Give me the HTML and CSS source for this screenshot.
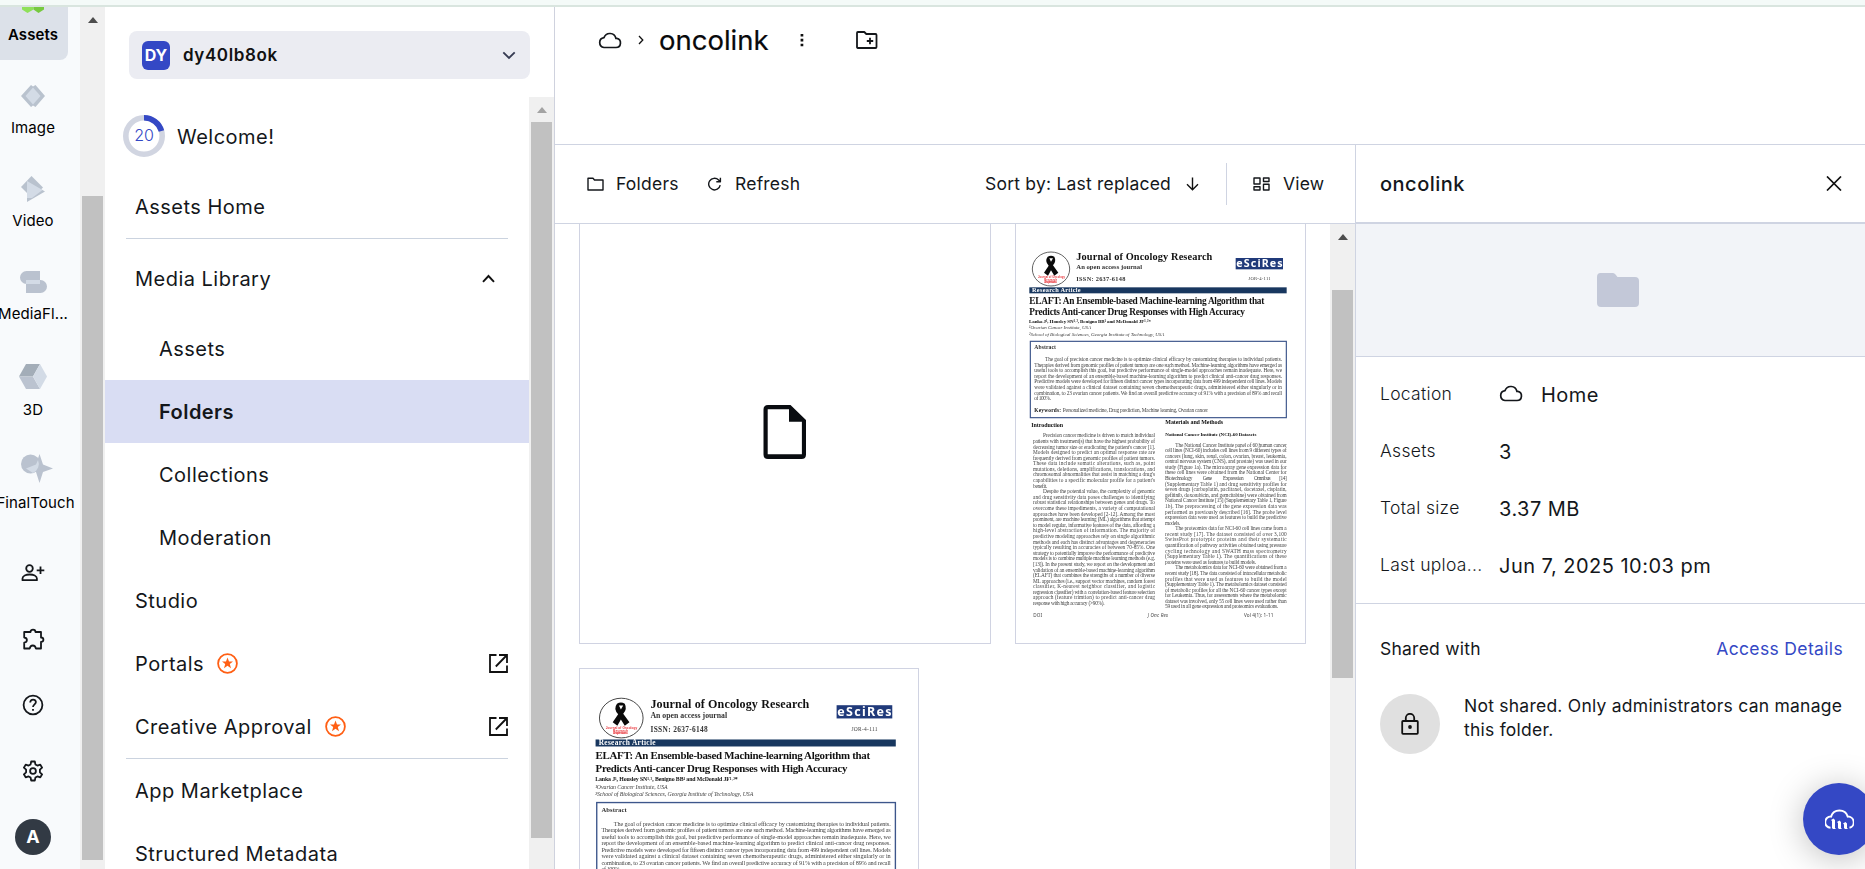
FILE: index.html
```html
<!DOCTYPE html>
<html lang="en">
<head>
<meta charset="utf-8">
<title>oncolink - Media Library</title>
<link rel="stylesheet" href="styles.css">
</head>
<body>
<div class="topstrip"></div>
<div class="app">
  <nav class="rail">
    <a class="product active">
      <svg class="picon" width="24" height="24" viewBox="0 0 24 24"><path d="M1 0h11.500v19.500L6.500 23 1 19.500z" fill="#8fe05a"/><path d="M12.500 0H23v19.500L17.500 23l-5-3.500z" fill="#76c93f"/></svg>
      <span>Assets</span></a>
    <a class="product first"><svg class="picon" width="24" height="22" viewBox="0 0 24 22"><path d="M10 0l2 1.500L14.500 0 24 11l-9.500 11-2.500-1.500L10 22 0 11z" fill="#b9c2ce"/><path d="M12 2.500L19.500 11 12 19.500 4.500 11z" fill="#d3dbe6"/></svg><span>Image</span></a>
    <a class="product video"><svg class="picon" width="24" height="26" viewBox="0 0 24 26"><path d="M10.500 0L22 11.500 11 22 0 11z" fill="#b9c2ce"/><path d="M6 5v21l18-10.500z" fill="#b9c2ce"/><path d="M6 5l15.500 9L11 22H6z" fill="#d3dbe6"/></svg><span>Video</span></a>
    <a class="product"><svg class="picon" width="27" height="22" viewBox="0 0 27 22"><path d="M6.500 0H20v13H6.500a6.500 6.500 0 0 1 0-13zM6 9h14.500a6.500 6.500 0 0 1 0 13H6z" fill="#bac2cf"/><path d="M6 9h14v4H6z" fill="#d3dbe6"/></svg><span>MediaFl...</span></a>
    <a class="product tall"><svg class="picon" width="28" height="25" viewBox="0 0 28 25"><path d="M7 0h14l-7 12.500H0z" fill="#a3adb8"/><path d="M0 12.500h14L21 25H7z" fill="#bbc3d0"/><path d="M21 0l7 12.500L21 25l-7-12.500z" fill="#d3dbe6"/></svg><span>3D</span></a>
    <a class="product last"><svg class="picon shift" width="32" height="29" viewBox="0 0 32 29"><circle cx="9.500" cy="10" r="9.500" fill="#bac2cf"/><path d="M18.500 0l3.500 10.500L32 14.500 22 18l-3.500 11L15 18 5 14.500l10-4z" fill="#bac2cf"/><path d="M5 14.500l10-4 2-4.500a10 10 0 0 1-5 13z" fill="#d3dbe6"/></svg><span>FinalTouch</span></a>
    <div class="tools">
      <svg width="24" height="24" viewBox="0 0 24 24" class="line"><circle cx="8.500" cy="7.500" r="3.300"/><path d="M1.500 19.200v-1.700c0-2.600 3.500-4 7.200-4s7.200 1.400 7.200 4v1.700zM19.500 5.500v7.500M15.700 9.300h7.600"/></svg>
      <svg width="24" height="24" viewBox="0 0 24 24" class="line"><path d="M3.200 5h6.300C9.500 1.700 14.500 1.700 14.500 5H20v5.500c3.200 0 3.200 4.300 0 4.300V21.500h-5.200c-.5-4-5.500-4-6 0H3.200v-5.800c3.600-.5 3.600-4.700 0-5.200z"/></svg>
      <svg width="24" height="24" viewBox="0 0 24 24" class="line"><circle cx="12" cy="12" r="9.400"/><path d="M9.200 9.500c.2-4 5.700-3.700 5.700-.4 0 2.200-2.900 2.400-2.900 5M12 16v1.800"/></svg>
      <svg width="24" height="24" viewBox="0 0 24 24" class="line"><circle cx="12" cy="12" r="2.900"/><path d="M10.200 2.500h3.600l.6 2.900 2 1.200 2.900-1 1.800 3.100-2.200 2v2.600l2.200 2-1.800 3.100-2.900-1-2 1.200-.6 2.900h-3.600l-.6-2.900-2-1.200-2.900 1-1.800-3.100 2.200-2v-2.600l-2.200-2 1.800-3.100 2.900 1 2-1.200z"/></svg>
      <b class="avatar">A</b>
    </div>
  </nav>
  <div class="scroll s-rail"><i class="arrow"></i><i class="thumb"></i></div>

  <aside class="sidebar">
    <div class="account"><b>DY</b><span>dy40lb8ok</span><svg width="14" height="9" viewBox="0 0 14 9"><path d="M1.300 1.300L7 7l5.700-5.700" fill="none" stroke="#363b52" stroke-width="1.800"/></svg></div>
    <div class="navwrap">
      <div class="nav">
        <div class="welcome"><svg width="42" height="42" viewBox="0 0 42 42"><circle cx="21" cy="21" r="18.200" fill="none" stroke="#d1d5e1" stroke-width="5.600"/><path d="M21 2.800A18.200 18.200 0 0 1 38.500 16" fill="none" stroke="#3448c5" stroke-width="5.600"/><text x="21" y="26.300" text-anchor="middle" class="ringnum">20</text></svg><span>Welcome!</span></div>
        <div class="row">Assets Home</div>
        <hr>
        <div class="row lib">Media Library<svg class="end up" width="13" height="9" viewBox="0 0 13 9"><path d="M1 7.800l5.500-5.800L12 7.800" fill="none" stroke="#111" stroke-width="1.900"/></svg></div>
        <div class="row sub">Assets</div>
        <div class="row sub current">Folders</div>
        <div class="row sub">Collections</div>
        <div class="row sub">Moderation</div>
        <div class="row">Studio</div>
        <div class="row">Portals<svg class="star" width="21" height="21" viewBox="0 0 21 21"><circle cx="10.500" cy="10.500" r="9.400" fill="none" stroke="#ff5f14" stroke-width="1.800"/><path d="M10.500 4.600l1.500 4h4l-3.200 2.500 1.200 4.100-3.500-2.400L7 15.200l1.200-4.100L5 8.600h4z" fill="#ff5f14"/></svg><svg class="end" width="19" height="19" viewBox="0 0 19 19"><path d="M7.500 1H1v17h17v-6.500M10 1h8v8M18 1L6.800 12.500" fill="none" stroke="#111" stroke-width="1.800"/></svg></div>
        <div class="row">Creative Approval<svg class="star" width="21" height="21" viewBox="0 0 21 21"><circle cx="10.500" cy="10.500" r="9.400" fill="none" stroke="#ff5f14" stroke-width="1.800"/><path d="M10.500 4.600l1.500 4h4l-3.200 2.500 1.200 4.100-3.500-2.400L7 15.200l1.200-4.100L5 8.600h4z" fill="#ff5f14"/></svg><svg class="end" width="19" height="19" viewBox="0 0 19 19"><path d="M7.500 1H1v17h17v-6.500M10 1h8v8M18 1L6.800 12.500" fill="none" stroke="#111" stroke-width="1.800"/></svg></div>
        <hr>
        <div class="row">App Marketplace</div>
        <div class="row">Structured Metadata</div>
      </div>
      <div class="scroll s-nav"><i class="arrow dim"></i><i class="thumb"></i></div>
    </div>
  </aside>

  <main class="main">
    <header class="crumbs">
      <svg width="24" height="18" viewBox="0 0 24 18" class="cloud"><path d="M6 16.500h12a4.600 4.600 0 0 0 .8-9.100h-.9A6.200 6.200 0 0 0 6 6.600a5 5 0 0 0 0 9.900z"/></svg>
      <svg class="sep" width="6" height="10" viewBox="0 0 6 10"><path d="M1 1l3.800 4L1 9" fill="none" stroke="#111" stroke-width="1.300"/></svg>
      <h1>oncolink</h1>
      <svg class="dots" width="4" height="14" viewBox="0 0 4 14"><path d="M.6 1h2.700v2.600H.6zM.6 5.800h2.700v2.600H.6zM.6 10.700h2.700v2.600H.6z" fill="#111"/></svg>
      <svg width="22" height="18" viewBox="0 0 22 18" class="line"><path d="M1.800 1h6.500l2 2h9.200q1 0 1 1v12q0 1-1 1H1.800q-.8 0-.8-1V2q0-1 .8-1zM14 6.800v6.400M10.800 10h6.400"/></svg>
    </header>
    <div class="lower">
      <section class="browser">
        <div class="toolbar">
          <svg width="17" height="14" viewBox="0 0 17 14" class="line thin"><path d="M1 1.200h5l1.500 1.800H16v10H1z"/></svg><span class="t-folders">Folders</span>
          <svg width="15" height="14" viewBox="0 0 15 14" class="line thin"><path d="M13.200 8.200A5.800 5.800 0 1 1 11.600 3l1.600 1.600M13.400.8v4H9.300"/></svg><span class="t-refresh">Refresh</span>
          <span class="t-sort">Sort by: Last replaced</span>
          <svg class="down" width="13" height="14" viewBox="0 0 13 14"><path d="M6.500.5v12M1 7.200l5.500 5.500L12 7.200" fill="none" stroke="#111" stroke-width="1.400"/></svg>
          <i class="vline"></i>
          <svg width="17" height="14" viewBox="0 0 17 14" class="line thin"><path d="M1 1h6v6H1zM10.500 1H16v3.500h-5.500zM1 9.700h6V13H1zM10.500 7.300H16V13h-5.500z"/></svg><span class="t-view">View</span>
        </div>
        <div class="gridwrap">
          <div class="cards">
            <div class="card c1"><svg width="43" height="54" viewBox="0 0 43 54"><path d="M5 0h22.500L43 15v34.500q0 4.500-4.500 4.500H5q-4.500 0-4.500-4.500V4.500Q.5 0 5 0zM4.700 4.300v45h34.200V16.700H26V4.300z" fill="#090c10" fill-rule="evenodd"/></svg></div>
            <div class="card c2">
              <svg class="doc" viewBox="18 12 867 1257" preserveAspectRatio="xMinYMin meet">
                <ellipse cx="123" cy="147" rx="56" ry="51" fill="#fff" stroke="#444" stroke-width="2.500"/>
                <path d="M113 110q10-6 20 0 7 14-4 26l16 22-12 9-10-16-9 16-12-9 14-21q-13-14-3-27zm5 5l5 10 6-10z" fill="#0a0a0a" fill-rule="evenodd"/>
                <g class="red"><text x="84" y="175" textLength="81">Journal of Oncology</text><text x="103" y="182" textLength="38">Research</text><text x="103" y="189" textLength="38">An open access</text></g>
                <text class="b" x="199" y="121" font-size="31" textLength="408">Journal of Oncology Research</text>
                <text class="b soft" x="199" y="146" font-size="20" textLength="197">An open access journal</text>
                <text class="b soft" x="199" y="184" font-size="19" textLength="147">ISSN:  2637-6148</text>
                <rect x="677" y="114" width="142" height="34" fill="#203a7a"/><text class="logo" x="679" y="141" textLength="139">eSciRes</text>
                <text x="715" y="179" font-size="14" textLength="67">JOR-4-111</text>
                <rect x="58" y="202" width="772" height="18" fill="#18375f"/><text class="b white" x="66" y="217" font-size="19" textLength="146">Research Article</text>
                <text class="b" x="58" y="251" font-size="28" textLength="705">ELAFT: An Ensemble-based Machine-learning Algorithm that</text>
                <text class="b" x="58" y="286" font-size="28" textLength="647">Predicts Anti-cancer Drug Responses with High Accuracy</text>
                <text class="b" x="57" y="308" font-size="15" textLength="366">Lanka J¹, Housley SN¹˒², Benigno BB¹ and McDonald JF¹˒²*</text>
                <text class="i" x="57" y="328" font-size="15" textLength="186">¹Ovarian Cancer Institute, USA</text>
                <text class="i" x="57" y="347" font-size="15" textLength="406">²School of Biological Sciences, Georgia Institute of Technology, USA</text>
                <rect x="61" y="364" width="768" height="229" fill="none" stroke="#3d568b" stroke-width="3.500"/>
                <text class="b soft" x="73" y="387" font-size="17" textLength="65">Abstract</text>
                <g class="body">
                <text x="105" y="423" textLength="711">The goal of precision cancer medicine is to optimize clinical efficacy by customizing therapies to individual patients.</text>
                <text x="73" y="440" textLength="743">Therapies derived from genomic profiles of patient tumors are one such method. Machine-learning algorithms have emerged as</text>
                <text x="73" y="457" textLength="743">useful tools to accomplish this goal, but predictive performance of single-model approaches remain inadequate. Here, we</text>
                <text x="73" y="473" textLength="743">report the development of an ensemble-based machine-learning algorithm to predict clinical anti-cancer drug responses.</text>
                <text x="73" y="490" textLength="743">Predictive models were developed for fifteen distinct cancer types incorporating data from 499 independent cell lines. Models</text>
                <text x="73" y="507" textLength="743">were validated against a clinical dataset containing seven chemotherapeutic drugs, administered either singularly or in</text>
                <text x="73" y="524" textLength="743">combination, to 23 ovarian cancer patients. We find an overall predictive accuracy of 91% with a precision of 89% and recall</text>
                <text x="73" y="541" textLength="50">of 100%.</text>
                <text class="b" x="73" y="577" textLength="80">Keywords:</text><text x="158" y="577" textLength="436">Personalized medicine, Drug prediction, Machine learning, Ovarian cancer</text>
                <text class="b" x="64" y="620" font-size="18" textLength="95">Introduction</text>
                <text x="99" y="652" textLength="336">Precision cancer medicine is driven to match individual</text>
                <text x="69" y="669" textLength="366">patients with treatment(s) that have the highest probability of</text>
                <text x="69" y="686" textLength="366">decreasing tumor size or eradicating the patient's cancer [1].</text>
                <text x="69" y="702" textLength="366">Models designed to predict an optimal response rate are</text>
                <text x="69" y="719" textLength="366">frequently derived from genomic profiles of patient tumors.</text>
                <text x="69" y="736" textLength="366">These data include somatic alterations, such as, point</text>
                <text x="69" y="753" textLength="366">mutations, deletions, amplifications, translocations, and</text>
                <text x="69" y="769" textLength="366">chromosomal abnormalities that assist in matching a drug's</text>
                <text x="69" y="786" textLength="366">capabilities to a specific molecular profile for a patient's</text>
                <text x="69" y="803" textLength="43">benefit.</text>
                <text x="99" y="820" textLength="336">Despite the potential value, the complexity of genomic</text>
                <text x="69" y="836" textLength="366">and drug sensitivity data poses challenges to identifying</text>
                <text x="69" y="853" textLength="366">robust statistical relationships between genes and drugs. To</text>
                <text x="69" y="870" textLength="366">overcome these impediments, a variety of computational</text>
                <text x="69" y="887" textLength="366">approaches have been developed [2-12]. Among the most</text>
                <text x="69" y="904" textLength="366">prominent, are machine learning (ML) algorithms that attempt</text>
                <text x="69" y="920" textLength="366">to model regular, informative features of the data, affording a</text>
                <text x="69" y="937" textLength="366">high-level abstraction of information. The majority of</text>
                <text x="69" y="954" textLength="366">predictive modeling approaches rely on single algorithmic</text>
                <text x="69" y="971" textLength="366">methods and each has distinct advantages and degeneracies</text>
                <text x="69" y="987" textLength="366">typically resulting in accuracies of between 70-85%. One</text>
                <text x="69" y="1004" textLength="366">strategy to potentially improve the performance of predictive</text>
                <text x="69" y="1021" textLength="366">models is to combine multiple machine learning methods (e.g.</text>
                <text x="69" y="1038" textLength="366">[13]). In the present study, we report on the development and</text>
                <text x="69" y="1055" textLength="366">validation of an ensemble-based machine-learning algorithm</text>
                <text x="69" y="1071" textLength="366">(ELAFT) that combines the strengths of a number of diverse</text>
                <text x="69" y="1088" textLength="366">ML approaches (i.e., support vector machines, random forest</text>
                <text x="69" y="1105" textLength="366">classifier, K-nearest neighbor classifier, and logistic</text>
                <text x="69" y="1121" textLength="366">regression classifier) with a correlation-based feature selection</text>
                <text x="69" y="1138" textLength="366">approach (feature trimtion) to predict anti-cancer drug</text>
                <text x="69" y="1154" textLength="215">response with high accuracy (&gt;90%).</text>
                <text class="b" x="466" y="613" font-size="18" textLength="173">Materials and Methods</text>
                <text class="b" x="466" y="649" font-size="15" textLength="273">National Cancer Institute (NCI)-60 Datasets</text>
                <text x="496" y="680" textLength="334">The National Cancer Institute panel of 60 human cancer</text>
                <text x="465" y="696" textLength="365">cell lines (NCI-60) includes cell lines from 9 different types of</text>
                <text x="465" y="713" textLength="365">cancers (lung, skin, renal, colon, ovarian, breast, leukemia,</text>
                <text x="465" y="730" textLength="365">central nervous system (CNS), and prostate) was used in our</text>
                <text x="465" y="747" textLength="365">study (Figure 1a). The microarray gene expression data for</text>
                <text x="465" y="763" textLength="365">these cell lines were obtained from the National Center for</text>
                <text x="465" y="780" textLength="82">Biotechnology</text><text x="578" y="780" textLength="28">Gene</text><text x="639" y="780" textLength="62">Expression</text><text x="732" y="780" textLength="50">Omnibus</text><text x="808" y="780" textLength="22">[14]</text>
                <text x="465" y="797" textLength="365">(Supplementary Table 1) and drug sensitivity profiles for</text>
                <text x="465" y="814" textLength="365">seven drugs (carboplatin, paclitaxel, docetaxel, cisplatin,</text>
                <text x="465" y="830" textLength="365">gefitinib, doxorubicin, and gemcitabine) were obtained from</text>
                <text x="465" y="847" textLength="365">National Cancer Institute [15] (Supplementary Table 1, Figure</text>
                <text x="465" y="864" textLength="365">1b). The preprocessing of the gene expression data was</text>
                <text x="465" y="881" textLength="365">performed as previously described [16]. The probe level</text>
                <text x="465" y="897" textLength="365">expression data were used as features to build the predictive</text>
                <text x="465" y="914" textLength="46">models.</text>
                <text x="496" y="931" textLength="334">The proteomics data for NCI-60 cell lines came from a</text>
                <text x="465" y="948" textLength="365">recent study [17]. The dataset consisted of over 3,100</text>
                <text x="465" y="964" textLength="365">SwissProt prototypic proteins and their systematic</text>
                <text x="465" y="981" textLength="365">quantification of pathway activities obtained using pressure</text>
                <text x="465" y="998" textLength="365">cycling technology and SWATH mass spectrometry</text>
                <text x="465" y="1015" textLength="365">(Supplementary Table 1). The quantifications of these</text>
                <text x="465" y="1031" textLength="273">proteins were used as features to build models.</text>
                <text x="496" y="1048" textLength="334">The metabolomics data for NCI-60 were obtained from a</text>
                <text x="465" y="1065" textLength="365">recent study [18]. The data consisted of intracellular metabolic</text>
                <text x="465" y="1082" textLength="365">profiles that were used as features to build the model</text>
                <text x="465" y="1098" textLength="365">(Supplementary Table 1). The metabolomics dataset consisted</text>
                <text x="465" y="1115" textLength="365">of metabolic profiles for all the NCI-60 cancer types except</text>
                <text x="465" y="1132" textLength="365">for Leukemia. Thus, for assessments where the metabolomic</text>
                <text x="465" y="1149" textLength="365">dataset was involved, only 55 cell lines were used rather than</text>
                <text x="465" y="1165" textLength="340">59 used in all gene expression and proteomics evaluations.</text>
                <text class="foot" x="70" y="1190" textLength="26">DOI</text><text class="foot it" x="413" y="1190" textLength="61">J Onc Res</text><text class="foot" x="702" y="1190" textLength="88">Vol 4(1): 1-11</text>
                </g>
              </svg>
            </div>
            <div class="card c3">
              <svg class="doc" viewBox="18 21 868 513" preserveAspectRatio="xMinYMin meet">
                <ellipse cx="124" cy="147" rx="56" ry="51" fill="#fff" stroke="#444" stroke-width="2.500"/>
                <path d="M113 110q10-6 20 0 7 14-4 26l16 22-12 9-10-16-9 16-12-9 14-21q-13-14-3-27zm5 5l5 10 6-10z" fill="#0a0a0a" fill-rule="evenodd"/>
                <g class="red"><text x="84" y="175" textLength="81">Journal of Oncology</text><text x="103" y="182" textLength="38">Research</text><text x="103" y="189" textLength="38">An open access</text></g>
                <text class="b" x="199" y="121" font-size="31" textLength="408">Journal of Oncology Research</text>
                <text class="b soft" x="199" y="146" font-size="20" textLength="197">An open access journal</text>
                <text class="b soft" x="199" y="184" font-size="19" textLength="147">ISSN:  2637-6148</text>
                <rect x="677" y="114" width="143" height="34" fill="#203a7a"/><text class="logo" x="679" y="141" textLength="139">eSciRes</text>
                <text x="715" y="179" font-size="14" textLength="67">JOR-4-111</text>
                <rect x="58" y="202" width="771" height="18" fill="#18375f"/><text class="b white" x="66" y="217" font-size="19" textLength="146">Research Article</text>
                <text class="b" x="58" y="251" font-size="28" textLength="705">ELAFT: An Ensemble-based Machine-learning Algorithm that</text>
                <text class="b" x="58" y="286" font-size="28" textLength="647">Predicts Anti-cancer Drug Responses with High Accuracy</text>
                <text class="b" x="57" y="308" font-size="15" textLength="366">Lanka J¹, Housley SN¹˒², Benigno BB¹ and McDonald JF¹˒²*</text>
                <text class="i" x="57" y="328" font-size="15" textLength="186">¹Ovarian Cancer Institute, USA</text>
                <text class="i" x="57" y="347" font-size="15" textLength="406">²School of Biological Sciences, Georgia Institute of Technology, USA</text>
                <rect x="61" y="364" width="767" height="229" fill="none" stroke="#3d568b" stroke-width="3.500"/>
                <text class="b soft" x="73" y="387" font-size="17" textLength="65">Abstract</text>
                <g class="body">
                <text x="105" y="423" textLength="711">The goal of precision cancer medicine is to optimize clinical efficacy by customizing therapies to individual patients.</text>
                <text x="73" y="440" textLength="743">Therapies derived from genomic profiles of patient tumors are one such method. Machine-learning algorithms have emerged as</text>
                <text x="73" y="457" textLength="743">useful tools to accomplish this goal, but predictive performance of single-model approaches remain inadequate. Here, we</text>
                <text x="73" y="473" textLength="743">report the development of an ensemble-based machine-learning algorithm to predict clinical anti-cancer drug responses.</text>
                <text x="73" y="490" textLength="743">Predictive models were developed for fifteen distinct cancer types incorporating data from 499 independent cell lines. Models</text>
                <text x="73" y="507" textLength="743">were validated against a clinical dataset containing seven chemotherapeutic drugs, administered either singularly or in</text>
                <text x="73" y="524" textLength="743">combination, to 23 ovarian cancer patients. We find an overall predictive accuracy of 91% with a precision of 89% and recall</text>
                <text x="73" y="541" textLength="50">of 100%.</text>
                </g>
              </svg>
            </div>
          </div>
          <div class="scroll s-main"><i class="arrow"></i><i class="thumb"></i></div>
        </div>
      </section>
      <section class="panel">
        <div class="phead"><h2>oncolink</h2><svg width="16" height="15" viewBox="0 0 16 15"><path d="M1 .5l14 14M15 .5L1 14.500" stroke="#111" stroke-width="1.700"/></svg></div>
        <div class="preview"><svg width="42" height="34" viewBox="0 0 42 34"><path d="M3.500 0H16q1.500 0 2.500 1.500L20.500 4H38q4 0 4 4v22q0 4-4 4H4q-4 0-4-4V4q0-4 3.500-4z" fill="#c3c8d8"/></svg></div>
        <dl class="facts">
          <dt>Location</dt><dd><svg width="24" height="18" viewBox="0 0 24 18" class="cloud"><path d="M6 16.500h12a4.600 4.600 0 0 0 .8-9.100h-.9A6.200 6.200 0 0 0 6 6.600a5 5 0 0 0 0 9.900z"/></svg>Home</dd>
          <dt>Assets</dt><dd>3</dd>
          <dt>Total size</dt><dd>3.37 MB</dd>
          <dt>Last uploa...</dt><dd>Jun 7, 2025 10:03 pm</dd>
        </dl>
        <div class="shared">
          <div class="shead"><span>Shared with</span><a>Access Details</a></div>
          <div class="sbody"><div class="lock"><svg width="18" height="22" viewBox="0 0 18 22" fill="none" stroke="#111" stroke-width="1.800"><path d="M2 8h14q.8 0 .8.800v11.200q0 .8-.8.800H2q-.8 0-.8-.8V8.800Q1.200 8 2 8zM4.800 8V5a4.200 4.200 0 0 1 8.400 0v3"/><circle cx="9" cy="14" r="1.900" fill="#111" stroke="none"/></svg></div><p>Not shared. Only administrators can manage<br>this folder.</p></div>
        </div>
      </section>
    </div>
  </main>
</div>
<div class="fab"><svg width="29" height="21" viewBox="0 0 29 21"><path d="M5.500 18.800A5.600 5.600 0 0 1 6 7.600a8.800 8.800 0 0 1 16.800 0A5.700 5.700 0 0 1 24.500 18.800" fill="none" stroke="#fff" stroke-width="2"/><path d="M6 11l2.500-1.500L10 11v8l1 1H8l-1-1v-7zM12 13l2.500-1.500L16 13v6l1 1h-3l-1-1v-5zM18 14.500l2.500-1.500 1.500 1.500V19l1 1h-3l-1-1v-3.500z" fill="#fff"/></svg></div>
</body>
</html>
```
FILE: styles.css
```css
* { box-sizing: border-box; }
html, body { margin: 0; height: 869px; overflow: hidden; }
body { font-family: Inter, "Liberation Sans", sans-serif; color: #14171b; background: #fff; position: relative; }
svg { display: block; flex: none; }
.topstrip { height: 7px; background: #f4faf8; border-bottom: 2px solid #d9e5df; }
.app { display: flex; height: 862px; overflow: hidden; }
.line { fill: none; stroke: #14171b; stroke-width: 1.8; stroke-linejoin: round; }
.thin { stroke-width: 1.4; }
.cloud { fill: none; stroke: #14171b; stroke-width: 1.7; }

.rail { width: 80px; background: #f8fafc; flex: none; overflow: hidden; }
.product { display: flex; flex-direction: column; align-items: center; justify-content: flex-end; width: 66px; height: 93px; padding-bottom: 15px; font-size: 15px; line-height: 24px; letter-spacing: .1px; color: #000; white-space: nowrap; }
.product span { margin-top: 9px; }
.product.active { height: 53px; width: 68px; padding: 0 2px 13px 0; background: #dce1e9; border-bottom-right-radius: 8px; font-weight: 600; overflow: hidden; }
.product.first { height: 95px; }
.product.video span { margin-top: 7px; }
.product.tall { height: 96px; }
.product.last { height: 93px; }
.product.last span { margin: 8px 0 0 5px; }
.shift { margin-left: 8px; }
.tools { display: flex; flex-direction: column; align-items: center; width: 66px; padding-top: 31px; gap: 42px; }
.avatar { width: 36px; height: 36px; margin-top: -6px; border-radius: 50%; background: #323a44; color: #fff; font-size: 18px; line-height: 36px; text-align: center; }

.scroll { width: 25px; flex: none; background: #f0f0f0; display: flex; flex-direction: column; align-items: center; }
.arrow { border: 5.500px solid transparent; border-top: 0; border-bottom: 6px solid #4d4d4d; }
.arrow.dim { border-bottom-color: #a3a3a3; }
.thumb { width: 21px; background: #c1c1c1; }
.s-rail .arrow { margin-top: 10px; }
.s-rail .thumb { margin-top: 173px; height: 664px; }
.s-nav .arrow { margin-top: 10px; }
.s-nav .thumb { margin-top: 9px; height: 716px; }
.s-main .arrow { margin-top: 10px; }
.s-main .thumb { margin-top: 50px; height: 388px; }

.sidebar { width: 450px; flex: none; border-right: 1px solid #cfd2de; }
.account { display: flex; align-items: center; height: 48px; margin: 24px 24px 18px; padding: 0 14px 0 13px; border-radius: 8px; background: #ebecf2; }
.account b { width: 28px; height: 29px; border-radius: 6px; background: #3448c5; color: #fff; font-size: 16px; line-height: 29px; text-align: center; }
.account span { flex: 1; margin-left: 13px; font-size: 17px; font-weight: 600; letter-spacing: .6px; color: #111; }
.navwrap { display: flex; height: 772px; }
.nav { width: 424px; overflow: hidden; font-size: 20px; letter-spacing: .48px; }
.nav hr { width: 382px; margin: 0 0 0 21px; border: 0; height: 1px; background: #cbd3df; }
.welcome { display: flex; align-items: center; gap: 12px; height: 78px; padding-left: 18px; }
.welcome span { padding-top: 2px; }
.ringnum { font-size: 16px; font-weight: 300; letter-spacing: 0; fill: #3448c5; }
.row { display: flex; align-items: center; height: 63px; padding: 0 21px 0 30px; white-space: nowrap; }
.row.lib { height: 78px; padding-top: 1px; }
.row.sub { padding-left: 54px; }
.row.current { background: #d9ddf3; font-weight: 600; letter-spacing: .45px; }
.star { margin-left: 13px; }
.end { margin-left: auto; }
.up { margin-right: 13px; }

.main { flex: 1; min-width: 0; display: flex; flex-direction: column; }
.crumbs { display: flex; align-items: center; height: 138px; padding: 0 0 71px 43px; border-bottom: 1px solid #cfd4e2; }
.sep { margin: 0 15px 0 16px; }
h1 { margin: 0; font-size: 27.500px; font-weight: 400; color: #08090b; -webkit-text-stroke: .2px; width: 108px; white-space: nowrap; }
.dots { margin: 0 52px 0 33px; }
.lower { display: flex; flex: 1; min-height: 0; }
.browser { width: 800px; flex: none; }
.toolbar { display: flex; align-items: center; height: 79px; padding-left: 32px; border-bottom: 1px solid #cfd4e2; font-size: 17.500px; letter-spacing: .22px; white-space: nowrap; }
.toolbar span { padding-bottom: 1px; }
.t-folders { margin-left: 12px; width: 91px; }
.t-refresh { margin-left: 13px; width: 250px; }
.t-sort { width: 201px; }
.vline { width: 1px; height: 42px; background: #cfd4e2; margin: 0 26px 0 27px; }
.t-view { margin-left: 13px; }
.gridwrap { display: flex; height: 645px; }
.cards { width: 775px; display: flex; flex-wrap: wrap; align-content: flex-start; gap: 24px; padding-left: 24px; overflow: hidden; }
.card { border: 1px solid #d0d3e2; background: #fff; overflow: hidden; flex: none; }
.c1 { width: 412px; height: 420px; border-top: 0; padding: 181px 0 0 183px; }
.c2 { width: 291px; height: 420px; border-top: 0; }
.c3 { width: 340px; height: 220px; }
.doc { width: 100%; font-family: "Liberation Serif", "Times New Roman", serif; fill: #3d3d3d; font-size: 15px; filter: blur(.4px); }
.doc .b { font-weight: 700; fill: #111; }
.doc .soft { fill: #333; }
.doc .i { font-style: italic; }
.doc .white { fill: #fff; }
.doc .red { fill: #e8353b; font: 700 8px "Liberation Sans", sans-serif; }
.doc .logo { fill: #fff; font: 700 32px "Noto Sans", sans-serif; }
.doc .body { fill: #444; font-size: 16px; }
.doc .foot { font: 14px "Noto Sans", sans-serif; }
.doc .it { font-style: italic; }

.panel { flex: 1; border-left: 1px solid #cfd4e2; min-width: 0; }
.phead { display: flex; align-items: center; justify-content: space-between; height: 79px; padding: 0 23px 0 24px; border-bottom: 2px solid #cfd4e2; }
h2 { margin: 0; font-size: 20px; font-weight: 500; letter-spacing: .5px; }
.preview { display: flex; align-items: center; justify-content: center; height: 133px; padding-left: 14px; background: #f2f4f8; border-bottom: 1px solid #cfd4e2; }
.facts { display: grid; grid-template-columns: 119px 1fr; grid-auto-rows: 57px; align-items: center; margin: 0; padding: 8px 0 0 24px; height: 247px; border-bottom: 1px solid #cfd4e2; }
dt { font-size: 17.500px; font-weight: 300; letter-spacing: .3px; white-space: nowrap; }
dd { margin: 2px 0 0; display: flex; align-items: center; gap: 18px; font-size: 20px; letter-spacing: .48px; white-space: nowrap; }
dd svg { margin-top: -4px; }
.shared { padding: 33px 22px 0 24px; font-size: 17.500px; letter-spacing: .24px; }
.shead { display: flex; justify-content: space-between; line-height: 24px; }
.shead a { color: #3448c5; letter-spacing: .35px; }
.sbody { display: flex; gap: 24px; margin-top: 33px; }
.lock { width: 60px; height: 60px; border-radius: 50%; background: #e0e0e0; display: flex; align-items: center; justify-content: center; flex: none; }
.sbody p { margin: 0; line-height: 24px; white-space: nowrap; }
.fab { position: absolute; left: 1803px; top: 783px; width: 72px; height: 72px; border-radius: 50%; background: #3448c5; box-shadow: 0 4px 34px rgba(0,0,0,.25); display: flex; align-items: center; justify-content: center; }
```
